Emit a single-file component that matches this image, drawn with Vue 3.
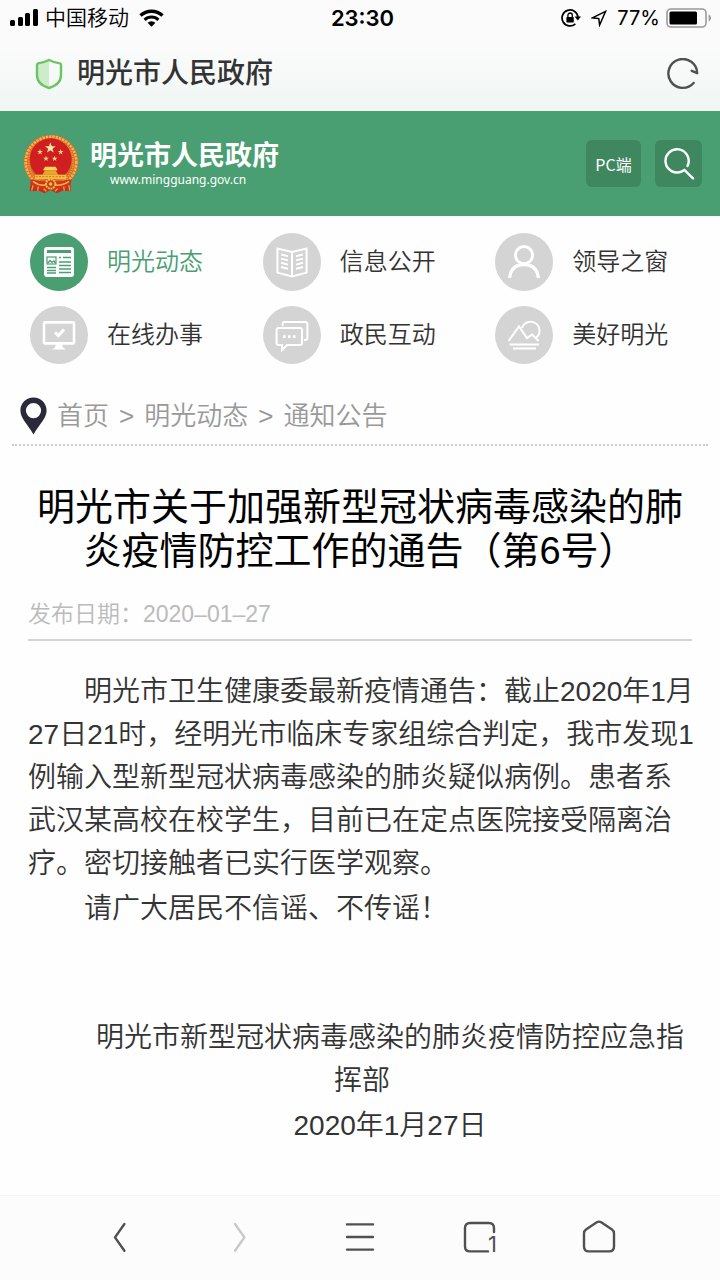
<template>
	<div class="page">
		<div class="status-bar">
			<div class="status-left">
				<svg width="28" height="18" viewBox="0 0 28 18" aria-hidden="true">
					<rect x="0" y="11" width="5" height="6" rx="1.5" />
					<rect x="8" y="8" width="5" height="9" rx="1.5" />
					<rect x="15" y="4" width="5" height="13" rx="1.5" />
					<rect x="23" y="0" width="5" height="17" rx="1.5" />
				</svg>
				<span class="carrier">中国移动</span>
				<svg width="25" height="18" viewBox="0 0 25 18" aria-hidden="true">
					<path d="M1.5 6.6 A16 16 0 0 1 23.5 6.6" fill="none" stroke="#000" stroke-width="3.4" />
					<path d="M5.6 10.8 A10 10 0 0 1 19.4 10.8" fill="none" stroke="#000" stroke-width="3" />
					<path d="M8.6 13.8 A5.6 5.6 0 0 1 16.4 13.8 L12.5 17.8 Z" />
				</svg>
			</div>
			<span class="time">23:30</span>
			<div class="status-right">
				<svg width="20" height="18" viewBox="0 0 20 18" aria-hidden="true">
					<path d="M14.4 14.9 A8 8 0 1 1 17 8" fill="none" stroke="#000" stroke-width="1.7" />
					<path d="M13.6 7.6 H20 L16.8 11.6 Z" />
					<rect x="5.4" y="8" width="7.4" height="5.6" rx="0.8" />
					<path d="M6.9 8 V6.2 A2.2 2.2 0 0 1 11.3 6.2 V8" fill="none" stroke="#000" stroke-width="1.3" />
				</svg>
				<svg class="arrow" width="16" height="17" viewBox="0 0 16 17" aria-hidden="true">
					<path d="M1.4 7.8 L14.6 1.4 L8.6 15 L7.8 8.6 Z" fill="none" stroke="#000" stroke-width="1.5" />
				</svg>
				<span class="percent">77%</span>
				<svg width="45" height="20" viewBox="0 0 45 20" aria-hidden="true">
					<rect x="1" y="1" width="39" height="18" rx="4" fill="none" stroke="#999" stroke-width="1.6" />
					<rect x="3.5" y="3.5" width="27.5" height="13" rx="1.5" />
					<path d="M42.6 6.5 Q45 7.4 45 10 Q45 12.6 42.6 13.5 Z" fill="#999" />
				</svg>
			</div>
		</div>

		<div class="address-bar">
			<svg width="28" height="32" viewBox="0 0 28 32" aria-hidden="true">
				<path d="M14 2 Q8 5 3 5.4 Q2 5.6 2 7 V17 Q2 26.5 14 30 Z" fill="#cdeccb" />
				<path
					d="M14 2 Q20 5 25 5.4 Q26 5.6 26 7 V17 Q26 26.5 14 30 Q2 26.5 2 17 V7 Q2 5.6 3 5.4 Q8 5 14 2 Z"
					fill="none"
					stroke="#6cc462"
					stroke-width="2.4"
				/>
			</svg>
			<span class="address">明光市人民政府</span>
			<button class="plain" type="button" aria-label="刷新">
				<svg width="32" height="32" viewBox="0 0 32 32">
					<path d="M26.6 25 A14.4 14.4 0 1 1 30.2 15.2 L24.8 12.8" class="stroke" />
				</svg>
			</button>
		</div>

		<header class="site-header">
			<a class="brand" href="#">
				<svg width="56" height="60" viewBox="0 0 168 180" aria-hidden="true">
					<path d="M24 132 L20 172 L48 170 L64 178 L82 168 L102 178 L118 170 L144 172 L140 132 Z" fill="#c92b1e" />
					<circle cx="84" cy="84" r="82" fill="#d8692b" />
					<circle cx="84" cy="84" r="76" fill="none" stroke="#f0b64c" stroke-width="8" stroke-dasharray="7 3" />
					<circle cx="84" cy="84" r="67" fill="none" stroke="#e39a3a" stroke-width="6" stroke-dasharray="4 3" />
					<circle cx="83" cy="76" r="63" fill="#d01f20" />
					<polygon :points="star(82, 42, 17)" fill="#ffe9a8" />
					<polygon v-for="s in smallStars" :key="s.join()" :points="star(s[0], s[1], 9)" fill="#fbd67c" />
					<path d="M66 98 H98 L104 109 H60 Z" fill="#f9d45c" />
					<path d="M64 109 H100 V113 L106 122 H58 L64 113 Z" fill="#e9a62f" />
					<path d="M36 122 H130 V136 H36 Z" fill="#f3bd3f" />
					<path d="M38 128 H128" stroke="#b9521f" stroke-width="2" stroke-dasharray="6 4" />
					<path d="M22 136 Q84 150 146 136 L142 160 L84 168 L26 160 Z" fill="#d1331f" />
					<path d="M30 142 Q56 162 82 148 Q108 162 138 142" fill="none" stroke="#f0b64c" stroke-width="5" />
					<circle cx="83" cy="150" r="14" fill="#c8401f" stroke="#f3bd3f" stroke-width="6" stroke-dasharray="6 2" />
					<circle cx="83" cy="150" r="5" fill="#f3bd3f" />
					<path d="M30 154 L26 170 M46 158 L44 170 M122 158 L124 170 M138 154 L140 170 M62 164 L70 172 M104 164 L96 172" stroke="#e9a62f" stroke-width="4" />
				</svg>
				<span class="brand-text">
					<strong>明光市人民政府</strong>
					<small>www.mingguang.gov.cn</small>
				</span>
			</a>
			<button class="header-button pc" type="button">PC端</button>
			<button class="header-button search" type="button" aria-label="搜索">
				<svg width="32" height="32" viewBox="0 0 32 32" fill="none" stroke="#fff" stroke-width="2.4" stroke-linecap="round">
					<path d="M24.5 18 A11.6 11.6 0 1 0 19 23.4 L21.4 22 L30 30.4" />
				</svg>
			</button>
		</header>

		<nav class="channels">
			<a v-for="item in channels" :key="item.name" href="#" :class="{ active: item.active }">
				<span class="circle">
					<svg width="34" height="34" viewBox="0 0 34 34" fill="none" stroke="#fff" stroke-width="2">
						<template v-if="item.icon === 'news'">
							<rect x="2" y="2" width="30" height="30" rx="3" fill="#fff" stroke="none" />
							<g stroke="#499f72">
								<path d="M5 6.5 H29" stroke-width="3" />
								<rect x="5" y="12" width="9" height="7" stroke-width="1.2" />
								<path d="M5.6 18 L8 15.5 L10 17.4 L12 16 L13.6 18" stroke-width="1.4" />
								<path d="M21 12.5 H29 M17 12.5 H19 M17 17 H29 M17 20.5 H29 M17 24 H29 M17 27.5 H29 M5 22.5 H14 M5 25.5 H14 M5 28 H14" stroke-width="1.5" />
							</g>
						</template>
						<template v-else-if="item.icon === 'book'">
							<path d="M17 7 L2.4 3.5 V27.6 L17 31.4 L31.6 27.6 V3.5 Z M17 7 V31" />
							<path d="M6 9.4 L13 11.2 M6 13.6 L13 15.4 M6 17.8 L13 19.6 M6 22 L13 23.8 M28 9.4 L21 11.2 M28 13.6 L21 15.4 M28 17.8 L21 19.6 M28 22 L21 23.8" />
						</template>
						<template v-else-if="item.icon === 'person'">
							<circle cx="17" cy="10.2" r="8.6" stroke-width="3" />
							<path d="M2.6 33 Q4 19.6 17 19.6 Q30 19.6 31.4 33" stroke-width="3.2" />
						</template>
						<template v-else-if="item.icon === 'screen'">
							<rect x="2" y="4.4" width="30" height="21" rx="1" stroke-width="2.6" />
							<path d="M13 14.4 L16.4 17.6 L22 11.6" stroke-width="3" />
							<path d="M14 26 H20 L21 29.6 L24 31.6 H10 L13 29.6 Z" fill="#fff" stroke="none" />
						</template>
						<template v-else-if="item.icon === 'chat'">
							<path d="M3.5 10 H25 Q27 10 27 12 V25 Q27 27 25 27 H12 L7 32 V27 H3.5 Q1.6 27 1.6 25 V12 Q1.6 10 3.5 10 Z" />
							<path d="M7.6 8 V6 Q7.6 4 9.6 4 H30 Q32.4 4 32.4 6 V20 Q32.4 22 30 22 H29" />
							<path d="M8 18.6 H10.6 M13 18.6 H15.6 M18 18.6 H20.6" stroke-width="2.6" />
						</template>
						<template v-else>
							<path d="M1.6 23 L12 8.4 L20 20 L25 16.6 L31.6 23 M15 10 A9 9 0 1 1 29.4 19.6" />
							<path d="M2.6 26.4 H32 M6 30.4 H29" />
						</template>
					</svg>
				</span>
				<span>{{ item.name }}</span>
			</a>
		</nav>

		<div class="crumbs">
			<svg width="27" height="38" viewBox="0 0 27 38" aria-hidden="true">
				<path
					d="M13.5 0.6 C6 0.6 0.4 6.4 0.4 13.6 C0.4 21 7.5 27.4 13.5 37.4 C19.5 27.4 26.6 21 26.6 13.6 C26.6 6.4 21 0.6 13.5 0.6 Z M13.5 6 A7.6 7.6 0 1 1 13.5 21.2 A7.6 7.6 0 1 1 13.5 6 Z"
					fill="#29293a"
					fill-rule="evenodd"
				/>
			</svg>
			<a href="#">首页</a>
			<span>&gt;</span>
			<a href="#">明光动态</a>
			<span>&gt;</span>
			<a href="#">通知公告</a>
		</div>

		<article>
			<div class="article-head">
				<h1>明光市关于加强新型冠状病毒感染的肺炎疫情防控工作的通告（第6号）</h1>
				<div class="date">发布日期：2020–01–27</div>
			</div>
			<div class="article-body">
				<p>明光市卫生健康委最新疫情通告：截止2020年1月27日21时，经明光市临床专家组综合判定，我市发现1例输入型新型冠状病毒感染的肺炎疑似病例。患者系武汉某高校在校学生，目前已在定点医院接受隔离治疗。密切接触者已实行医学观察。</p>
				<p>请广大居民不信谣、不传谣！</p>
				<div class="signature">
					<p>明光市新型冠状病毒感染的肺炎疫情防控应急指挥部</p>
					<p>2020年1月27日</p>
				</div>
			</div>
		</article>

		<footer class="toolbar">
			<button class="plain" type="button" aria-label="后退">
				<svg width="34" height="34" viewBox="0 0 34 34">
					<path d="M21.4 3 L12 16.4 L21.4 29.8" class="stroke" />
				</svg>
			</button>
			<button class="plain" type="button" aria-label="前进" disabled>
				<svg width="34" height="34" viewBox="0 0 34 34">
					<path d="M12 3 L21.4 16.4 L12 29.8" class="stroke" />
				</svg>
			</button>
			<button class="plain" type="button" aria-label="菜单">
				<svg width="34" height="34" viewBox="0 0 34 34">
					<path d="M4 3.4 H30 M4 16 H30 M4 28.6 H30" class="stroke" />
				</svg>
			</button>
			<button class="plain tabs" type="button" aria-label="标签页">
				<svg width="34" height="34" viewBox="0 0 34 34">
					<path d="M31 11 V7 Q31 2 26 2 H7 Q2 2 2 7 V25.4 Q2 30.4 7 30.4 H25" class="stroke" />
				</svg>
				<span>1</span>
			</button>
			<button class="plain" type="button" aria-label="主页">
				<svg class="home" width="34" height="34" viewBox="0 0 34 34">
					<path d="M13.8 1.2 Q16 0 18.2 1.2 L29 8.4 Q31 9.8 31 12.4 V25.6 Q31 30.4 26.2 30.4 H5.8 Q1 30.4 1 25.6 V12.4 Q1 9.8 3 8.4 Z" class="stroke" />
				</svg>
			</button>
		</footer>
	</div>
</template>

<script setup>
const channels = [
	{ name: '明光动态', icon: 'news', active: true },
	{ name: '信息公开', icon: 'book' },
	{ name: '领导之窗', icon: 'person' },
	{ name: '在线办事', icon: 'screen' },
	{ name: '政民互动', icon: 'chat' },
	{ name: '美好明光', icon: 'scenery' }
]

const smallStars = [[51, 54], [113, 54], [69, 74], [95, 74]]

// five-pointed star around (cx, cy)
const star = (cx, cy, r) => {
	const points = []
	for (let i = 0; i < 10; i++) {
		const radius = i % 2 ? r * 0.4 : r
		const angle = (Math.PI / 5) * i - Math.PI / 2
		points.push(`${cx + radius * Math.cos(angle)},${cy + radius * Math.sin(angle)}`)
	}
	return points.join(' ')
}
</script>

<style>
body {
	margin: 0;
	background: #fefefe;
}
</style>

<style scoped>
.page {
	display: flex;
	flex-direction: column;
	min-height: 100vh;
	font-family: 'Liberation Sans', 'Noto Sans CJK SC', sans-serif;
	font-weight: 350;
	color: #333;
	background: linear-gradient(#fbfbfb 0, #fbfbfb 46px, #eff6f4 111px, #fefefe 111px);
}

a {
	color: inherit;
	text-decoration: none;
}

svg {
	display: block;
	flex: none;
}

.plain {
	display: flex;
	padding: 0;
	border: 0;
	background: none;
	color: #505050;
}

.plain:disabled {
	color: #c8c8c8;
}

.stroke {
	fill: none;
	stroke: currentColor;
	stroke-width: 2.4;
	stroke-linecap: round;
	stroke-linejoin: round;
}

.home {
	overflow: visible;
}

.status-bar {
	display: grid;
	grid-template-columns: 1fr auto 1fr;
	align-items: center;
	height: 36px;
	padding: 0 9px 0 10px;
	color: #000;
	font-family: Inter, 'Noto Sans CJK SC', sans-serif;
}

.status-left,
.status-right {
	display: flex;
	align-items: center;
}

.status-right {
	justify-content: flex-end;
}

.carrier {
	margin: 0 10px 0 7px;
	font-size: 21px;
	line-height: 28px;
}

.time {
	padding-left: 4px;
	font-size: 22px;
	font-weight: 600;
}

.arrow {
	margin: 0 10px;
}

.percent {
	margin-right: 6px;
	font-size: 20px;
	font-weight: 400;
}

.address-bar {
	display: flex;
	align-items: center;
	height: 75px;
	padding: 0 21px 0 35px;
}

.address {
	flex: 1;
	margin-left: 14px;
	font-size: 28px;
	font-weight: 500;
	line-height: 36px;
}

.site-header {
	display: flex;
	align-items: center;
	gap: 14px;
	height: 105px;
	padding: 0 18px 0 23px;
	background: #499f72;
	color: #fff;
}

.brand {
	display: flex;
	flex: 1;
	align-items: center;
	gap: 11px;
}

.brand-text {
	display: flex;
	flex-direction: column;
}

.brand-text strong {
	font-size: 27px;
	line-height: 32px;
}

.brand-text small {
	padding-left: 20px;
	font-family: 'Noto Sans', sans-serif;
	font-size: 12px;
	font-weight: 400;
	line-height: 16px;
}

.header-button {
	display: flex;
	align-items: center;
	justify-content: center;
	height: 47px;
	padding: 0;
	border: 0;
	border-radius: 6px;
	background: #3f875f;
	color: #fff;
	font-family: 'Noto Sans CJK SC', sans-serif;
	font-size: 16px;
	line-height: 20px;
}

.pc {
	width: 55px;
}

.search {
	width: 47px;
}

.channels {
	display: grid;
	grid-template-columns: repeat(3, 1fr);
	row-gap: 15px;
	padding: 17px 12px 0 10px;
}

.channels a {
	display: flex;
	align-items: center;
	gap: 19px;
	padding-left: 20px;
	font-size: 24px;
	line-height: 30px;
}

.channels .active {
	color: #499f72;
}

.circle {
	display: flex;
	align-items: center;
	justify-content: center;
	width: 58px;
	height: 58px;
	border-radius: 50%;
	background: #d4d4d4;
}

.active .circle {
	background: #499f72;
}

.crumbs {
	display: flex;
	align-items: center;
	gap: 10px;
	height: 56px;
	margin: 24px 12px 0;
	padding-left: 8px;
	border-bottom: 2px dotted #ccc;
	color: #999;
	font-size: 26px;
	line-height: 34px;
}

.article-head {
	margin: 0 28px;
	padding-top: 39px;
	border-bottom: 2px solid #d4d4d4;
}

h1 {
	margin: 0;
	color: #000;
	font-size: 38px;
	font-weight: 400;
	line-height: 44px;
	text-align: center;
}

.date {
	padding: 24px 0 8px;
	color: #bbb;
	font-size: 23px;
	line-height: 34px;
}

.article-body {
	padding: 29px 24px 20px 28px;
	font-size: 28px;
	line-height: 43px;
}

p {
	margin: 0 0 2px;
	text-indent: 2em;
}

.signature {
	padding-top: 84px;
	text-align: center;
}

.toolbar {
	position: sticky;
	bottom: 0;
	display: grid;
	grid-template-columns: repeat(5, 1fr);
	align-items: center;
	justify-items: center;
	height: 84px;
	margin-top: auto;
	padding: 0 60px;
	border-top: 1px solid #f5f5f5;
	background: #fcfcfc;
}

.tabs {
	position: relative;
}

.tabs span {
	position: absolute;
	right: 0;
	bottom: 0;
	font-family: Inter, sans-serif;
	font-size: 22px;
	line-height: 22px;
}
</style>
